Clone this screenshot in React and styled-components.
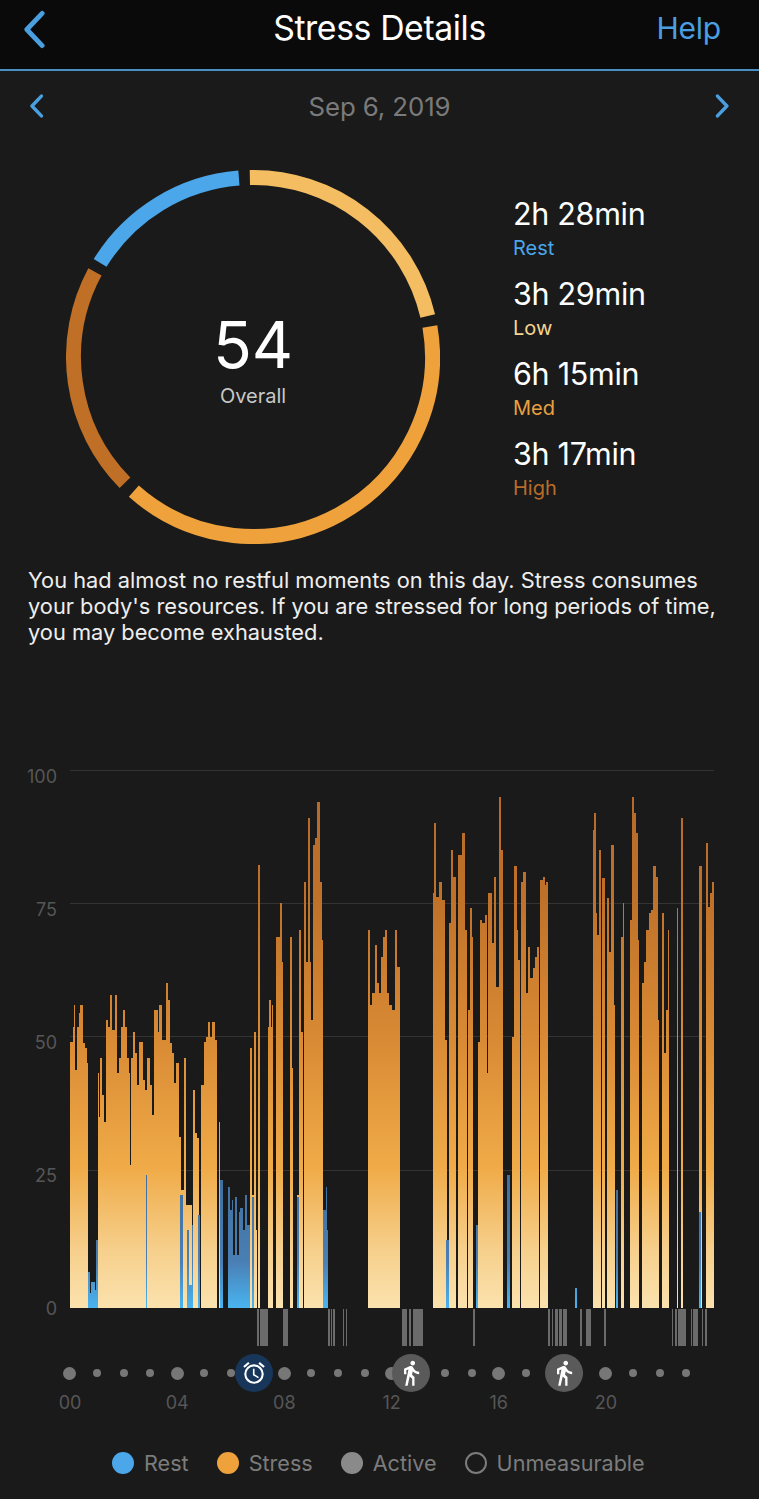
import React from 'react'
import styled, { createGlobalStyle } from 'styled-components'
import { MdDirectionsWalk, MdOutlineAlarm } from 'react-icons/md'

const GlobalStyle = createGlobalStyle`
  html, body {
    margin: 0;
    padding: 0;
    background: #1a1a1a;
  }
  * {
    box-sizing: border-box;
  }
`

const Page = styled.div`
  width: 759px;
  height: 1499px;
  overflow: hidden;
  background: #1a1a1a;
  font-family: Inter, "Liberation Sans", sans-serif;
`

const Header = styled.header`
  height: 71px;
  background: #0a0a0a;
  border-bottom: 2px solid #4a8fc4;
  display: grid;
  grid-template-columns: 1fr auto 1fr;
  align-items: center;
  padding: 0 38px 13px;
`

const BackButton = styled.span`
  display: flex;
  margin: 3px 0 0 -16px;
`

const Title = styled.h1`
  margin: 0;
  font-size: 33.8px;
  line-height: 40px;
  font-weight: 400;
  letter-spacing: -0.4px;
  color: #fff;
`

const Help = styled.span`
  justify-self: end;
  font-size: 30px;
  line-height: 40px;
  letter-spacing: -0.2px;
  color: #4a9fe0;
`

const DateRow = styled.div`
  height: 70px;
  display: flex;
  align-items: center;
  justify-content: space-between;
  padding: 0 29px;
`

const DateText = styled.span`
  font-size: 25.8px;
  letter-spacing: -0.1px;
  color: #7a7a7a;
`

const Chevron = ({ dir = 'left', size = 24, weight = 3.4 }) => (
  <svg width={size * 0.62} height={size} viewBox="0 0 15 24" fill="none">
    <polyline
      points={dir === 'left' ? '12.5,2 3,12 12.5,22' : '2.5,2 12,12 2.5,22'}
      stroke="#4a9fe0"
      strokeWidth={weight}
      strokeLinecap="round"
      strokeLinejoin="round"
    />
  </svg>
)

const Summary = styled.section`
  margin-top: 29px;
  padding-left: 66px;
  display: flex;
  align-items: flex-start;
`

const RingWrap = styled.div`
  position: relative;
  width: 374px;
  height: 374px;
`

const RingCenter = styled.div`
  position: absolute;
  inset: 0;
  display: flex;
  flex-direction: column;
  align-items: center;
  padding-top: 138px;
`

const Score = styled.span`
  font-size: 64px;
  line-height: 74px;
  color: #fff;
`

const ScoreLabel = styled.span`
  margin-top: 1px;
  font-size: 20px;
  line-height: 26px;
  color: #c8c8c8;
`

const Stats = styled.div`
  margin: 26px 0 0 73px;
  display: flex;
  flex-direction: column;
  gap: 14px;
`

const Stat = styled.div`
  display: flex;
  flex-direction: column;
  height: 66px;
`

const StatValue = styled.span`
  font-size: 30.5px;
  line-height: 36px;
  letter-spacing: -0.3px;
  color: #fff;
`

const StatLabel = styled.span`
  margin-top: 2px;
  font-size: 20px;
  line-height: 28px;
  color: ${p => p.$color};
`

const Message = styled.p`
  margin: 23px 0 0;
  padding: 0 28px;
  font-size: 21.8px;
  line-height: 26px;
  color: #eee;
`

const ChartRow = styled.section`
  margin-top: 125px;
  display: flex;
  align-items: flex-start;
`

const YAxis = styled.div`
  width: 70px;
  height: 552px;
  margin-top: -3px;
  padding-right: 13px;
  display: flex;
  flex-direction: column;
  justify-content: space-between;
  align-items: flex-end;
`

const YLabel = styled.span`
  font-size: 18px;
  line-height: 20px;
  color: #565656;
`

const ChartSvg = styled.svg`
  display: block;
`

const SoftBars = styled.g`
  filter: blur(0.45px);
`

const Timeline = styled.div`
  position: relative;
  margin: 8px 0 0 56.6px;
  width: 643.2px;
  height: 38px;
  display: grid;
  grid-template-columns: repeat(24, 26.8px);
  align-items: center;
  justify-items: center;
`

const Dot = styled.span`
  width: ${p => (p.$big ? 13 : 8)}px;
  height: ${p => (p.$big ? 13 : 8)}px;
  border-radius: 50%;
  background: #777;
`

const Marker = styled.span`
  position: absolute;
  top: 0;
  left: ${p => p.$left}px;
  width: 38px;
  height: 38px;
  border-radius: 50%;
  background: ${p => p.$bg};
  color: #fff;
  display: flex;
  align-items: center;
  justify-content: center;
`

const Hours = styled.div`
  margin: 0 0 0 16.4px;
  display: grid;
  grid-template-columns: repeat(6, 107.2px);
`

const Hour = styled.span`
  text-align: center;
  font-size: 18px;
  line-height: 22px;
  color: #565656;
`

const Legend = styled.div`
  margin-top: 36px;
  padding-left: 112px;
  display: flex;
  align-items: center;
  gap: 28px;
`

const LegendItem = styled.div`
  display: flex;
  align-items: center;
  gap: 10px;
  font-size: 21.6px;
  line-height: 26px;
  color: #7c7c7c;
`

const Swatch = styled.span`
  width: 22px;
  height: 22px;
  border-radius: 50%;
  background: ${p => p.$color || 'transparent'};
  border: ${p => (p.$color ? 'none' : '2px solid #7c7c7c')};
`

const CX = 187
const CY = 187
const R = 179.5

const point = deg => {
  const a = (deg * Math.PI) / 180
  return [CX + R * Math.sin(a), CY - R * Math.cos(a)]
}

const arcPath = (from, to) => {
  const [x0, y0] = point(from)
  const [x1, y1] = point(to)
  return `M${x0} ${y0}A${R} ${R} 0 ${to - from > 180 ? 1 : 0} 1 ${x1} ${y1}`
}

const arcs = [
  { from: -1, to: 76.8, color: '#f4bd62' },
  { from: 80.2, to: 221.6, color: '#efa23c' },
  { from: 225.5, to: 298.3, color: '#bf6f26' },
  { from: 301.6, to: 355.5, color: '#4ba6ea' }
]

const stats = [
  { value: '2h 28min', label: 'Rest', color: '#4ba6ea' },
  { value: '3h 29min', label: 'Low', color: '#f6d490' },
  { value: '6h 15min', label: 'Med', color: '#e9a040' },
  { value: '3h 17min', label: 'High', color: '#b96c2a' }
]

// [x, top] in page pixels, each step runs until the next x. top 0 means no bar
const bars = [
  [70, 1042], [73, 1027], [74, 1005], [75, 1070], [77, 1027], [79, 1013], [80, 1005], [83, 1043], [85, 1048], [87, 1063], [88, 0],
  [98, 1073], [99, 1117], [100, 1058], [102, 1095], [104, 1122], [106, 1020], [108, 1027], [110, 995], [112, 1030], [115, 995], [117, 1073], [119, 1058], [121, 1027], [123, 1010], [125, 1027], [127, 1058], [129, 1073], [130, 1165], [131, 1058], [133, 1032], [135, 1053], [137, 1085], [139, 1042], [143, 1080], [145, 1090], [147, 1058], [150, 1085], [152, 1115], [154, 1010], [158, 1032], [159, 1005], [162, 1040], [166, 983], [168, 1000], [170, 1043], [172, 1053], [174, 1083], [176, 1063], [179, 1137], [181, 1190],
  [184, 1058], [186, 1205], [192, 1225], [193, 1090], [195, 1133], [197, 1138], [199, 0], [201, 1085], [204, 1042], [206, 1037], [208, 1022], [210, 1037], [212, 1022], [215, 1040], [217, 0],
  [219, 1122], [220, 0],
  [250, 1048], [252, 1195], [254, 1032], [256, 1230], [257, 0], [258, 865], [260, 0],
  [268, 1027], [269, 1000], [271, 1027], [272, 1005], [273, 0], [276, 937], [280, 903], [282, 962], [283, 0],
  [290, 937], [292, 1068], [293, 0], [297, 1195], [299, 930], [301, 1032], [303, 0],
  [304, 882], [306, 962], [308, 818], [310, 962], [311, 1020], [313, 845], [315, 838], [317, 802], [320, 882], [322, 940], [323, 1210], [326, 1187], [327, 1230], [328, 0],
  [368, 930], [370, 1005], [372, 993], [375, 945], [377, 983], [379, 993], [381, 957], [383, 937], [385, 930], [387, 993], [389, 1005], [392, 1010], [395, 930], [397, 967], [400, 0],
  [433, 893], [434, 823], [436, 897], [439, 882], [442, 900], [445, 1040], [447, 0],
  [449, 923], [451, 850], [453, 877], [456, 0],
  [458, 855], [462, 833], [465, 930], [467, 0],
  [468, 1010], [470, 908], [472, 937], [473, 0],
  [478, 1042], [480, 920], [482, 923], [485, 915], [487, 1073], [488, 893], [492, 943], [494, 877], [496, 987], [499, 797], [501, 850], [503, 0],
  [512, 1037], [514, 866], [517, 930], [518, 960], [520, 0], [521, 882], [523, 872], [526, 993], [528, 947], [530, 978], [533, 968], [535, 957], [537, 947], [539, 0], [540, 880], [543, 877], [545, 885], [546, 882], [548, 0],
  [593, 830], [594, 813], [596, 913], [597, 935], [599, 850], [601, 0], [602, 878], [605, 0], [607, 898], [609, 952], [611, 845], [614, 1005], [615, 0],
  [621, 937], [623, 903], [624, 0],
  [630, 920], [632, 797], [634, 813], [636, 833], [638, 940], [639, 0],
  [642, 983], [644, 962], [646, 930], [649, 913], [651, 910], [653, 866], [656, 877], [658, 1020], [659, 0],
  [662, 913], [664, 1053], [666, 1010], [668, 930], [669, 0],
  [677, 908], [678, 0],
  [681, 818], [683, 0],
  [699, 866], [702, 0],
  [706, 843], [708, 907], [710, 893], [712, 882], [714, 0]
]

// rest periods, [x0, x1, top]
const restBars = [
  [88, 90, 1272], [90, 91, 1293], [91, 95, 1282], [95, 96, 1290], [96, 98, 1240],
  [146, 147, 1175],
  [180, 183, 1195], [187, 189, 1230], [189, 192, 1285], [192, 193, 1225], [198, 200, 1215],
  [220, 223, 1180],
  [228, 230, 1187], [230, 232, 1210], [232, 233, 1200], [233, 235, 1255], [235, 237, 1197], [237, 239, 1255], [239, 240, 1212], [240, 243, 1208], [243, 245, 1230], [245, 247, 1195], [247, 250, 1225],
  [252, 254, 1197], [297, 299, 1197], [323, 326, 1210], [326, 327, 1187], [327, 328, 1230],
  [446, 449, 1240], [476, 478, 1225], [507, 510, 1175], [575, 577, 1288], [616, 618, 1190], [699, 701, 1212]
]

const activity = [
  [257, 259], [260, 268], [283, 288], [328, 330], [331, 332], [333, 335], [343, 344], [346, 347],
  [402, 407], [409, 411], [413, 423], [473, 475],
  [548, 550], [552, 553], [555, 558], [559, 562], [563, 567], [580, 582], [586, 591], [604, 606],
  [672, 673], [675, 677], [678, 686], [691, 692], [693, 698], [702, 703], [705, 707]
]

const gridLines = [770, 903, 1036, 1170]

const StressChart = () => (
  <ChartSvg width="644" height="576" viewBox="70 770 644 576">
    <defs>
      <linearGradient id="stress" gradientUnits="userSpaceOnUse" x1="0" y1="770" x2="0" y2="1308">
        <stop offset="0" stopColor="#b5672a" />
        <stop offset="0.25" stopColor="#c0722a" />
        <stop offset="0.5" stopColor="#d98a34" />
        <stop offset="0.74" stopColor="#f0ab48" />
        <stop offset="0.89" stopColor="#f6cf8b" />
        <stop offset="1" stopColor="#fbe2ae" />
      </linearGradient>
      <linearGradient id="rest" gradientUnits="userSpaceOnUse" x1="0" y1="1175" x2="0" y2="1308">
        <stop offset="0" stopColor="#3f6f9f" />
        <stop offset="0.65" stopColor="#4a7fb4" />
        <stop offset="1" stopColor="#4ab4f0" />
      </linearGradient>
    </defs>
    {gridLines.map(y => (
      <rect key={y} x="70" y={y} width="644" height="1" fill="#333" />
    ))}
    <SoftBars>
      {bars.map(([x, top], i) =>
        top && i < bars.length - 1 ? (
          <rect key={x} x={x} y={top} width={bars[i + 1][0] - x} height={1308 - top} fill="url(#stress)" />
        ) : null
      )}
      {restBars.map(([x0, x1, top]) => (
        <rect key={x0} x={x0} y={top} width={x1 - x0} height={1308 - top} fill="url(#rest)" />
      ))}
    </SoftBars>
    {activity.map(([x0, x1]) => (
      <rect key={x0} x={x0} y="1309" width={x1 - x0} height="37" fill="#6b6b6b" />
    ))}
  </ChartSvg>
)

const App = () => (
  <Page>
    <GlobalStyle />
    <Header>
      <BackButton>
        <Chevron size={39} weight={3} />
      </BackButton>
      <Title>Stress Details</Title>
      <Help>Help</Help>
    </Header>
    <DateRow>
      <Chevron size={24} />
      <DateText>Sep 6, 2019</DateText>
      <Chevron dir="right" size={24} />
    </DateRow>
    <Summary>
      <RingWrap>
        <svg width="374" height="374" viewBox="0 0 374 374" fill="none">
          {arcs.map(a => (
            <path key={a.from} d={arcPath(a.from, a.to)} stroke={a.color} strokeWidth="15" />
          ))}
        </svg>
        <RingCenter>
          <Score>54</Score>
          <ScoreLabel>Overall</ScoreLabel>
        </RingCenter>
      </RingWrap>
      <Stats>
        {stats.map(s => (
          <Stat key={s.label}>
            <StatValue>{s.value}</StatValue>
            <StatLabel $color={s.color}>{s.label}</StatLabel>
          </Stat>
        ))}
      </Stats>
    </Summary>
    <Message>
      You had almost no restful moments on this day. Stress consumes your body's resources. If you are stressed for
      long periods of time, you may become exhausted.
    </Message>
    <ChartRow>
      <YAxis>
        {['100', '75', '50', '25', '0'].map(l => (
          <YLabel key={l}>{l}</YLabel>
        ))}
      </YAxis>
      <StressChart />
    </ChartRow>
    <Timeline>
      {Array.from({ length: 24 }, (_, h) => (
        <Dot key={h} $big={h % 4 === 0} />
      ))}
      <Marker $left={178.6} $bg="#17365a">
        <MdOutlineAlarm size={26} />
      </Marker>
      <Marker $left={335.6} $bg="#5a5a5a">
        <MdDirectionsWalk size={28} />
      </Marker>
      <Marker $left={488.6} $bg="#5a5a5a">
        <MdDirectionsWalk size={28} />
      </Marker>
    </Timeline>
    <Hours>
      {['00', '04', '08', '12', '16', '20'].map(h => (
        <Hour key={h}>{h}</Hour>
      ))}
    </Hours>
    <Legend>
      <LegendItem>
        <Swatch $color="#4ba6ea" />
        Rest
      </LegendItem>
      <LegendItem>
        <Swatch $color="#efa23c" />
        Stress
      </LegendItem>
      <LegendItem>
        <Swatch $color="#8a8a8a" />
        Active
      </LegendItem>
      <LegendItem>
        <Swatch />
        Unmeasurable
      </LegendItem>
    </Legend>
  </Page>
)

export default App
